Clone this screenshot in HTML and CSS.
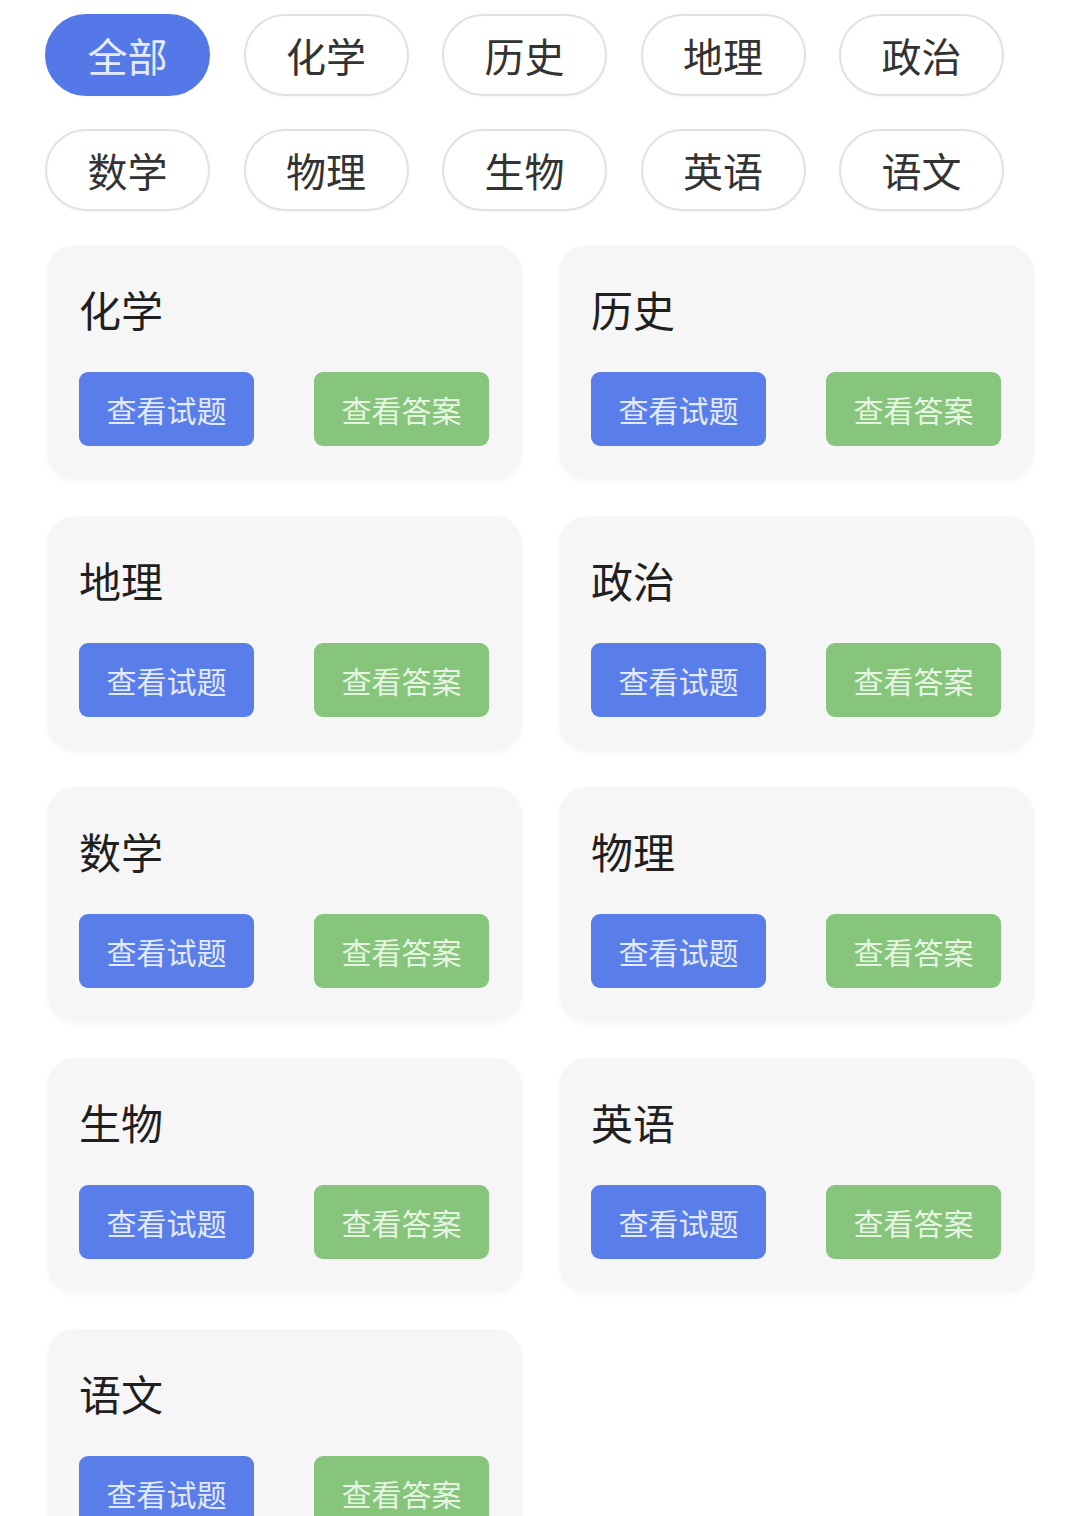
FILE: index.html
```html
<!DOCTYPE html>
<html lang="zh">
<head>
<meta charset="utf-8">
<link rel="stylesheet" href="styles.css">
</head>
<body>
<div class="page">
  <div class="tabs">
    <div class="tab active">全部</div>
    <div class="tab">化学</div>
    <div class="tab">历史</div>
    <div class="tab">地理</div>
    <div class="tab">政治</div>
    <div class="tab">数学</div>
    <div class="tab">物理</div>
    <div class="tab">生物</div>
    <div class="tab">英语</div>
    <div class="tab">语文</div>
  </div>
  <div class="grid">
    <div class="card"><div class="title">化学</div><div class="btns"><div class="btn blue">查看试题</div><div class="btn green">查看答案</div></div></div>
    <div class="card"><div class="title">历史</div><div class="btns"><div class="btn blue">查看试题</div><div class="btn green">查看答案</div></div></div>
    <div class="card"><div class="title">地理</div><div class="btns"><div class="btn blue">查看试题</div><div class="btn green">查看答案</div></div></div>
    <div class="card"><div class="title">政治</div><div class="btns"><div class="btn blue">查看试题</div><div class="btn green">查看答案</div></div></div>
    <div class="card"><div class="title">数学</div><div class="btns"><div class="btn blue">查看试题</div><div class="btn green">查看答案</div></div></div>
    <div class="card"><div class="title">物理</div><div class="btns"><div class="btn blue">查看试题</div><div class="btn green">查看答案</div></div></div>
    <div class="card"><div class="title">生物</div><div class="btns"><div class="btn blue">查看试题</div><div class="btn green">查看答案</div></div></div>
    <div class="card"><div class="title">英语</div><div class="btns"><div class="btn blue">查看试题</div><div class="btn green">查看答案</div></div></div>
    <div class="card"><div class="title">语文</div><div class="btns"><div class="btn blue">查看试题</div><div class="btn green">查看答案</div></div></div>
  </div>
</div>
</body>
</html>
```
FILE: styles.css
```css
html, body {
  margin: 0;
  padding: 0;
  background: #ffffff;
}
body {
  font-family: "Noto Sans CJK SC", "Noto Sans", sans-serif;
  color: #222222;
}
.page {
  padding: 14px 0 0 45px;
  width: 1080px;
  box-sizing: border-box;
}
.tabs {
  display: grid;
  grid-template-columns: repeat(5, 165px);
  column-gap: 33.5px;
  row-gap: 33px;
}
.tab {
  height: 82px;
  box-sizing: border-box;
  border: 2px solid #e2e2e2;
  border-radius: 41px;
  display: flex;
  align-items: center;
  justify-content: center;
  font-size: 40px;
  color: #333333;
  background: #ffffff;
  box-shadow: 0 1px 3px rgba(0,0,0,0.04);
}
.tab.active {
  background: #5478e7;
  border-color: #5478e7;
  color: #e4ebfb;
}
.grid {
  margin-top: 34px;
  margin-left: 2px;
  display: grid;
  grid-template-columns: 475px 475px;
  column-gap: 37px;
  row-gap: 36px;
}
.card {
  background: #f6f6f6;
  border-radius: 28px;
  padding: 39px 32px 34px 32px;
  height: 235px;
  box-sizing: border-box;
  box-shadow: 0 2px 6px rgba(0,0,0,0.03);
}
.title {
  font-size: 42px;
  line-height: 50px;
  color: #1f1f1f;
}
.btns {
  margin-top: 38px;
  display: flex;
  justify-content: space-between;
  padding-right: 1px;
}
.btn {
  width: 175px;
  height: 74px;
  border-radius: 9px;
  display: flex;
  align-items: center;
  justify-content: center;
  font-size: 30px;
}
.btn.blue {
  background: #5a7ee9;
  color: #e3eafb;
}
.btn.green {
  background: #86c57b;
  color: #e6f5e2;
}
```
